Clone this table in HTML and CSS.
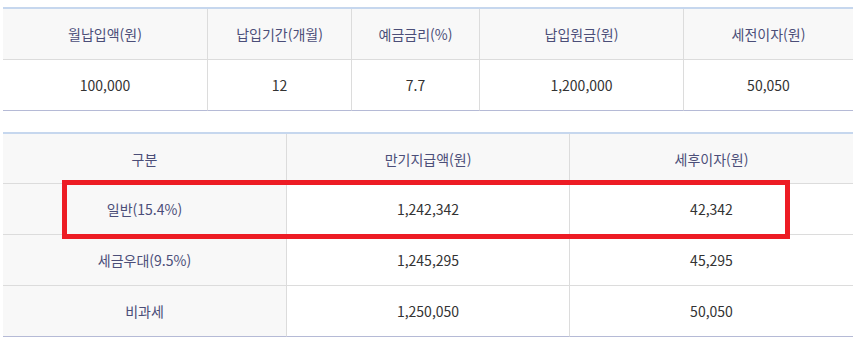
FILE: index.html
```html
<!DOCTYPE html>
<html lang="ko">
<head>
<meta charset="utf-8">
<link rel="stylesheet" href="styles.css">
</head>
<body>
<div class="page">
  <table class="tbl tbl-top">
    <colgroup>
      <col class="c1"><col class="c2"><col class="c3"><col class="c4"><col class="c5">
    </colgroup>
    <thead>
      <tr>
        <th>월납입액(원)</th>
        <th>납입기간(개월)</th>
        <th>예금금리(%)</th>
        <th>납입원금(원)</th>
        <th>세전이자(원)</th>
      </tr>
    </thead>
    <tbody>
      <tr>
        <td>100,000</td>
        <td>12</td>
        <td>7.7</td>
        <td>1,200,000</td>
        <td>50,050</td>
      </tr>
    </tbody>
  </table>

  <div class="result-wrap">
    <table class="tbl tbl-result">
      <colgroup>
        <col class="r1"><col class="r2"><col class="r3">
      </colgroup>
      <thead>
        <tr>
          <th>구분</th>
          <th>만기지급액(원)</th>
          <th>세후이자(원)</th>
        </tr>
      </thead>
      <tbody>
        <tr>
          <th class="label">일반(15.4%)</th>
          <td>1,242,342</td>
          <td>42,342</td>
        </tr>
        <tr>
          <th class="label">세금우대(9.5%)</th>
          <td>1,245,295</td>
          <td>45,295</td>
        </tr>
        <tr>
          <th class="label">비과세</th>
          <td>1,250,050</td>
          <td>50,050</td>
        </tr>
      </tbody>
    </table>
    <div class="highlight"></div>
  </div>
</div>
</body>
</html>
```

FILE: styles.css
```css
html, body {
  margin: 0;
  padding: 0;
  background: #ffffff;
}

.page {
  padding: 7px 6px 0 3px;
  font-family: "Noto Sans CJK KR", "Noto Sans", sans-serif;
  font-size: 14px;
}

.tbl {
  width: 850px;
  border-collapse: separate;
  border-spacing: 0;
  table-layout: fixed;
  border-top: 2px solid #c6d7ee;
}

.tbl th,
.tbl td {
  padding: 0;
  text-align: center;
  vertical-align: middle;
  height: 50px;
  border-bottom: 1px solid #dcdcdc;
  line-height: 20px;
}

.tbl th + th,
.tbl td,
.tbl th + td {
  border-left: 1px solid #dcdcdc;
}

.tbl tr > :first-child {
  border-left: none;
}

.tbl th {
  background: #f8f8f8;
  color: #4b4e78;
  font-weight: normal;
}

.tbl td {
  background: #ffffff;
  color: #333333;
}

.tbl tbody tr:last-child th,
.tbl tbody tr:last-child td {
  border-bottom-color: #b5bad6;
}

.c1 { width: 204px; }
.c2 { width: 144px; }
.c3 { width: 128px; }
.c4 { width: 204px; }
.c5 { width: 170px; }

.r1 { width: 283px; }
.r2 { width: 283px; }
.r3 { width: 284px; }

.tbl-top {
  margin-bottom: 21px;
}

.tbl-result thead th {
  height: 49px;
}

.result-wrap {
  position: relative;
  width: 850px;
}

.highlight {
  position: absolute;
  left: 59px;
  top: 48px;
  width: 728px;
  height: 59px;
  box-sizing: border-box;
  border: 5px solid #ed1c24;
}
```
